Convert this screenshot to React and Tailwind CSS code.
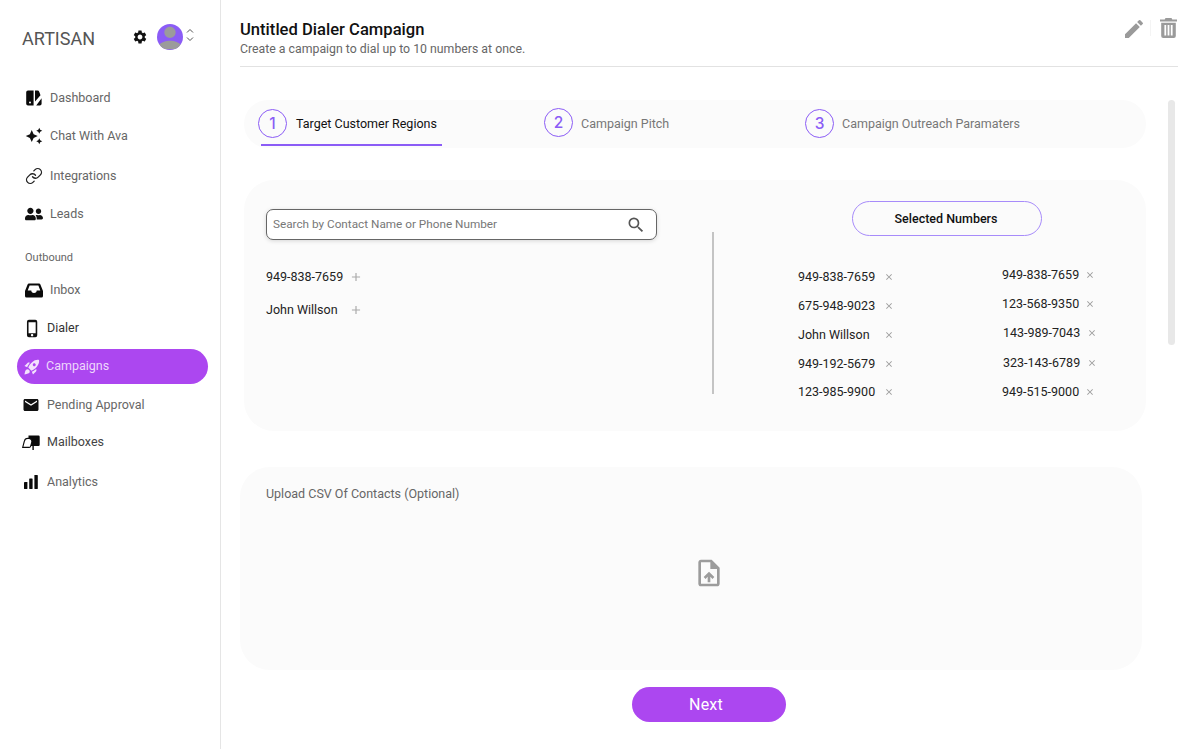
import React from "react";
import { Link as LinkIcon } from "lucide-react";
import { FaUserFriends } from "react-icons/fa";
import {
  MdSettings, MdPerson, MdAutoAwesome, MdPhoneIphone, MdRocketLaunch, MdEmail,
  MdEdit, MdSearch, MdOutlineUploadFile, MdAdd, MdClose,
} from "react-icons/md";

function DashIcon() {
  return (
    <svg width="18" height="18" viewBox="0 0 18 18" fill="#0a0a0a">
      <path d="M3 1.5h5.6v15H3a1.8 1.8 0 0 1-1.8-1.8V3.3A1.8 1.8 0 0 1 3 1.5z" />
      <path d="M10 1.5h2.4a2 2 0 0 1 1.9 1.4l1.2 3.4-5.5 6.2z" />
      <path d="M16.6 9.3v5.4a1.8 1.8 0 0 1-1.8 1.8h-3.6z" />
      <circle cx="5" cy="13.6" r="1" fill="#fff" />
    </svg>
  );
}

function InboxIcon() {
  return (
    <svg width="18" height="15" viewBox="0 0 18 15">
      <path fill="#0a0a0a" d="M4 .5h10a1.5 1.5 0 0 1 1.4 1L18 8v5a1.5 1.5 0 0 1-1.5 1.5h-15A1.5 1.5 0 0 1 0 13V8L2.6 1.5A1.5 1.5 0 0 1 4 .5z" />
      <path fill="#fff" d="M4.6 2.5h8.8l1.9 5h-3.6a2.7 2.4 0 0 1-5.4 0H2.7z" />
    </svg>
  );
}

function MailboxIcon() {
  return (
    <svg width="18" height="15" viewBox="0 0 18 15">
      <path fill="#0a0a0a" d="M6.5 .5h10a1.2 1.2 0 0 1 1.2 1.2v8a1.2 1.2 0 0 1-1.2 1.2H6.5z" />
      <path fill="#fff" stroke="#0a0a0a" strokeWidth="1.1" d="M.7 12.4 2.4 6a3.4 3.4 0 0 1 3.3-2.6h1.2a3 3 0 0 1 2.9 3.7l-1.2 4.3c-.2.7-.7 1-1.4 1z" />
      <path fill="#0a0a0a" d="M10.4 10h1.4v5h-1.4z" />
    </svg>
  );
}

function BarsIcon() {
  return (
    <svg width="14" height="14" viewBox="0 0 14 14" fill="#0a0a0a">
      <rect x="0" y="7" width="3.4" height="7" rx="0.4" />
      <rect x="5.2" y="3.5" width="3.4" height="10.5" rx="0.4" />
      <rect x="10.4" y="0" width="3.4" height="14" rx="0.4" />
    </svg>
  );
}

function TrashIcon() {
  return (
    <svg width="17" height="20" viewBox="0 0 17 20" fill="#9a9a9a">
      <path d="M5.5 0h6l.8 1.4H17v2.2H0V1.4h4.7z" />
      <path fillRule="evenodd" d="M1.2 4.8h14.6V18a2 2 0 0 1-2 2H3.2a2 2 0 0 1-2-2zM4.4 7v10.5h1.8V7zm3.2 0v10.5h1.8V7zm3.2 0v10.5h1.8V7z" />
    </svg>
  );
}

function UpDownIcon() {
  return (
    <svg width="10" height="14" viewBox="0 0 10 14" fill="none" stroke="#555" strokeWidth="1">
      <path d="M2 4.5 5 1.5l3 3M2 9.5l3 3 3-3" />
    </svg>
  );
}

function NavItem({ icon, label, className = "", textClass = "text-[#666]" }) {
  return (
    <div className={`flex items-center ${className}`}>
      {icon}
      <span className={`text-[12.5px] ${textClass}`}>{label}</span>
    </div>
  );
}

function Step({ n, label, active, className = "", circleClass = "" }) {
  return (
    <div className={`flex items-center ${active ? "gap-[9px]" : "gap-[8px]"} ${className}`}>
      <div className={`w-[29px] h-[29px] rounded-full border border-[#8b5cf6] flex items-center justify-center text-[#8b5cf6] text-[15.5px] font-medium font-['Inter',sans-serif] ${circleClass}`}>
        {n}
      </div>
      <span className={`text-[12.5px] mt-[2px] ${active ? "text-[#111]" : "text-[#777]"}`}>{label}</span>
    </div>
  );
}

function Picked({ text, width, className = "" }) {
  return (
    <div className={`flex items-center h-[20px] ${className}`}>
      <span className="text-[12.5px] text-[#222]" style={{ width }}>{text}</span>
      <MdClose size={10} className="text-[#999]" />
    </div>
  );
}

export default function App() {
  return (
    <div className="flex w-[1200px] h-[749px] overflow-hidden bg-white font-['Roboto',sans-serif]">
      <aside className="w-[221px] h-full shrink-0 border-r border-[#e5e5e5] flex flex-col">
        <div className="flex items-center pl-[22px] pt-[24px] h-[50px]">
          <span className="text-[18px] text-[#555] w-[110px] mt-[3px]">ARTISAN</span>
          <MdSettings size={16} className="text-[#111] mr-[9px]" />
          <div className="w-[26px] h-[26px] rounded-full bg-[#8b5cf6] flex items-end justify-center overflow-hidden">
            <MdPerson size={34} className="text-[#9b9b9b] shrink-0 -mb-[5px]" />
          </div>
          <div className="ml-[2px] -mt-[4px]"><UpDownIcon /></div>
        </div>

        <div className="flex flex-col pl-[25px] pt-[38px]">
          <NavItem className="h-[20px] gap-[7px]" icon={<DashIcon />} label="Dashboard" />
          <NavItem className="h-[20px] gap-[7px] mt-[18px]" icon={<MdAutoAwesome size={18} className="text-[#111]" />} label="Chat With Ava" />
          <NavItem className="h-[20px] gap-[7px] mt-[20px]" icon={<LinkIcon size={18} strokeWidth={1.75} className="text-[#222]" />} label="Integrations" />
          <NavItem className="h-[20px] gap-[7px] mt-[18px]" icon={<FaUserFriends size={18} className="text-[#111]" />} label="Leads" />
        </div>

        <div className="pl-[25px] mt-[27px] text-[11px] text-[#666] leading-[14px]">Outbound</div>

        <div className="flex flex-col mt-[15px]">
          <NavItem className="h-[20px] pl-[25px] gap-[7px]" icon={<InboxIcon />} label="Inbox" />
          <NavItem className="h-[20px] pl-[23px] gap-[5px] mt-[18px]" textClass="text-[#333]" icon={<MdPhoneIphone size={19} className="text-[#111]" />} label="Dialer" />
          <div className="mt-[11px] ml-[17px] w-[191px] h-[35px] rounded-full bg-[#ac47f0] flex items-center pl-[6px] gap-[5px]">
            <MdRocketLaunch size={18} className="text-[#f3e3fd]" />
            <span className="text-[12.5px] text-[#eed8fc]">Campaigns</span>
          </div>
          <NavItem className="h-[20px] pl-[22px] gap-[7px] mt-[11px]" icon={<MdEmail size={18} className="text-[#111]" />} label="Pending Approval" />
          <NavItem className="h-[20px] pl-[22px] gap-[7px] mt-[17px]" textClass="text-[#444]" icon={<MailboxIcon />} label="Mailboxes" />
          <NavItem className="h-[20px] pl-[24px] gap-[9px] mt-[20px]" icon={<BarsIcon />} label="Analytics" />
        </div>
      </aside>

      <main className="flex-1 min-w-0 flex flex-col pl-[19px] pr-[22px]">
        <header className="h-[67px] shrink-0 border-b border-[#e2e2e2] flex justify-between pt-[20px]">
          <div>
            <h1 className="text-[16.6px] font-medium text-[#111] leading-[20px]">Untitled Dialer Campaign</h1>
            <p className="text-[12.3px] text-[#666] leading-[16px] mt-[1px]">Create a campaign to dial up to 10 numbers at once.</p>
          </div>
          <div className="flex items-start text-[#9a9a9a] mr-[1px]">
            <MdEdit size={24} className="-mt-[3px]" />
            <div className="w-px h-[16px] bg-[#f4f4f4] mx-[4px]" />
            <div className="-mt-[2px] ml-[5px]"><TrashIcon /></div>
          </div>
        </header>

        <div className="flex mt-[33px] flex-1 min-h-0">
          <div className="w-[906px] shrink-0 flex flex-col">
            <div className="ml-[4px] w-[902px] h-[48px] shrink-0 rounded-[24px] bg-[#fbfbfb] flex pl-[14px] pt-[9px]">
              <div className="relative w-[286px]">
                <Step n="1" label="Target Customer Regions" active />
                <div className="absolute left-[3px] top-[35px] w-[181px] h-[2px] bg-[#8b5cf6]" />
              </div>
              <Step n="2" label="Campaign Pitch" className="w-[261px] self-start" circleClass="-translate-y-px" />
              <Step n="3" label="Campaign Outreach Paramaters" className="self-start" />
            </div>

            <section className="ml-[4px] mt-[32px] w-[902px] h-[251px] shrink-0 rounded-[30px] bg-[#fbfbfb] flex">
              <div className="w-[468px] shrink-0 pl-[22px] pt-[29px]">
                <div className="w-[391px] h-[31px] rounded-[7px] border border-[#666] bg-white shadow-[0_1px_4px_rgba(0,0,0,0.15)] flex items-center justify-between pl-[6px] pr-[10px]">
                  <span className="text-[11.75px] text-[#777]">Search by Contact Name or Phone Number</span>
                  <MdSearch size={20} className="text-[#555]" />
                </div>
                <div className="flex items-center mt-[27px] h-[20px]">
                  <span className="text-[12.5px] text-[#222] w-[83px]">949-838-7659</span>
                  <MdAdd size={14} className="text-[#aaa]" />
                </div>
                <div className="flex items-center mt-[13px] h-[20px]">
                  <span className="text-[12.5px] text-[#222] w-[83px]">John Willson</span>
                  <MdAdd size={14} className="text-[#aaa]" />
                </div>
              </div>

              <div className="w-[2px] h-[162px] mt-[52px] bg-[#c4c4c4] shrink-0" />

              <div className="flex-1 pt-[21px]">
                <div className="ml-[138px] w-[190px] h-[35px] rounded-full border border-[#a78bfa] flex items-center justify-center pr-[2px] pt-px text-[12.5px] font-medium text-[#111]">
                  Selected Numbers
                </div>
                <div className="flex ml-[84px]">
                  <div className="w-[204px] pt-[31px]">
                    <Picked text="949-838-7659" width={86} />
                    <Picked text="675-948-9023" width={86} className="mt-[9px]" />
                    <Picked text="John Willson" width={86} className="mt-[9px]" />
                    <Picked text="949-192-5679" width={86} className="mt-[9px]" />
                    <Picked text="123-985-9900" width={86} className="mt-[8px]" />
                  </div>
                  <div className="pt-[29px]">
                    <Picked text="949-838-7659" width={83} />
                    <Picked text="123-568-9350" width={83} className="mt-[9px]" />
                    <Picked text="143-989-7043" width={84} className="mt-[9px] ml-[1px]" />
                    <Picked text="323-143-6789" width={84} className="mt-[10px] ml-[1px]" />
                    <Picked text="949-515-9000" width={83} className="mt-[9px]" />
                  </div>
                </div>
              </div>
            </section>

            <section className="mt-[36px] w-[902px] h-[203px] shrink-0 rounded-[30px] bg-[#fbfbfb] pl-[26px] pt-[19px]">
              <div className="text-[12.5px] text-[#666] leading-[16px]">Upload CSV Of Contacts (Optional)</div>
              <div className="flex justify-center mt-[55px] pl-[10px]">
                <MdOutlineUploadFile size={32} className="text-[#9c9c9c]" />
              </div>
            </section>

            <button className="mt-[17px] ml-[392px] w-[154px] h-[35px] shrink-0 rounded-full bg-[#ac47f0] text-white text-[16px] tracking-[0.2px] pr-[6px]">
              Next
            </button>
          </div>

          <div className="ml-[22px] w-[7px] h-[245px] rounded-full bg-[#e8e8e8] shrink-0" />
        </div>
      </main>
    </div>
  );
}
